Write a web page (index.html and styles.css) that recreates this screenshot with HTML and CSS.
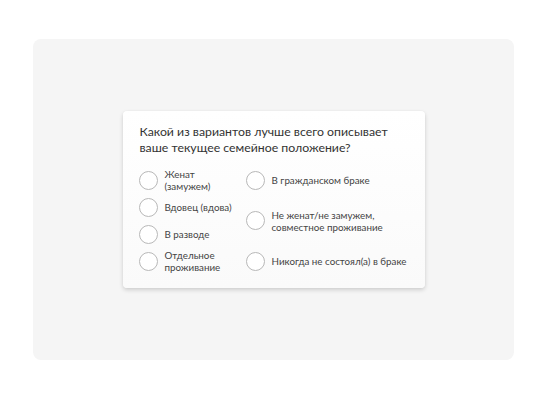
FILE: index.html
```html
<!DOCTYPE html>
<html lang="ru">
<head>
    <meta charset="UTF-8">
    <title>Семейное положение</title>
    <link rel="stylesheet" href="styles.css">
</head>
<body>
<div class="panel">
    <div class="card">
        <h2 class="question">Какой из вариантов лучше всего описывает<br>ваше текущее семейное положение?</h2>
        <div class="options">
            <div class="col">
                <label class="opt"><span class="radio"></span><span class="txt">Женат<br>(замужем)</span></label>
                <label class="opt"><span class="radio"></span><span class="txt">Вдовец (вдова)</span></label>
                <label class="opt"><span class="radio"></span><span class="txt">В разводе</span></label>
                <label class="opt"><span class="radio"></span><span class="txt">Отдельное<br>проживание</span></label>
            </div>
            <div class="col">
                <label class="opt"><span class="radio"></span><span class="txt">В гражданском браке</span></label>
                <label class="opt"><span class="radio"></span><span class="txt">Не женат/не замужем,<br>совместное проживание</span></label>
                <label class="opt"><span class="radio"></span><span class="txt">Никогда не состоял(а) в браке</span></label>
            </div>
        </div>
    </div>
</div>
</body>
</html>
```

FILE: styles.css
```css
* {
    margin: 0;
    padding: 0;
    box-sizing: border-box;
}

body {
    background: #fff;
    font-family: Lato, "Open Sans", "Liberation Sans", sans-serif;
    padding: 39px 33px 40px;
}

.panel {
    height: 321px;
    background: #f5f5f5;
    border-radius: 8px;
    display: flex;
    align-items: center;
    justify-content: center;
}

.card {
    width: 302px;
    background: linear-gradient(#fff, #fafafa);
    border-radius: 4px;
    box-shadow: 0 2px 4px rgba(0, 0, 0, .16), 0 0 1px rgba(0, 0, 0, .08);
    padding: 13px 10px 14px 16px;
}

.question {
    font-size: 12.3px;
    font-weight: 400;
    line-height: 16px;
    color: #333;
    padding-left: 1px;
    margin-bottom: 11px;
}

.options {
    display: grid;
    grid-template-columns: 107px 1fr;
}

.col {
    display: flex;
    flex-direction: column;
    justify-content: space-between;
    gap: 1px;
}

.opt {
    display: flex;
    align-items: center;
    gap: 7px;
    min-height: 26px;
}

.radio {
    flex: none;
    width: 19px;
    height: 19px;
    border: 1px solid #b8b8b8;
    border-radius: 50%;
    background: #fff;
}

.txt {
    font-size: 9.8px;
    line-height: 12px;
    color: #444;
}
```
